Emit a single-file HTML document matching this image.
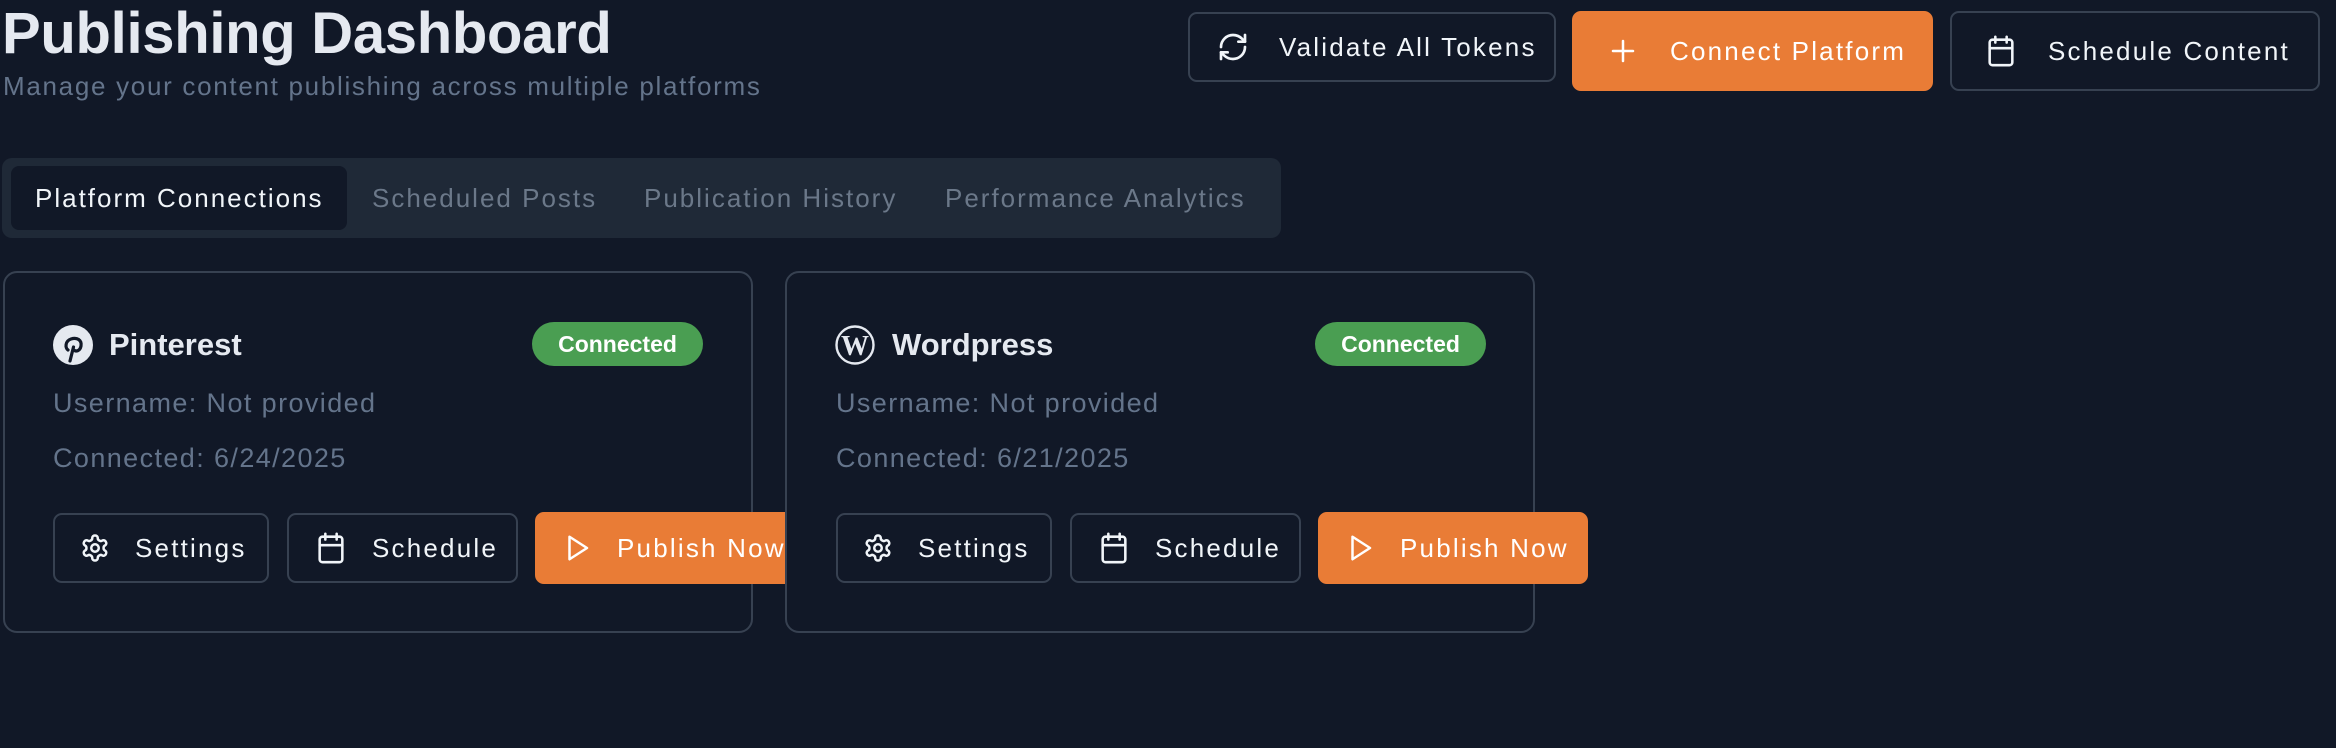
<!DOCTYPE html>
<html><head><meta charset="utf-8"><style>
*{box-sizing:border-box;margin:0;padding:0}
body{width:2336px;height:748px;background:#111827;font-family:"Liberation Sans",sans-serif;position:relative;overflow:hidden;color:#f1f5f9}
.a{position:absolute}
h1{position:absolute;left:2px;top:0px;font-size:58px;font-weight:700;color:#e5e9f0;letter-spacing:-0.3px;white-space:nowrap}
.sub{left:3px;top:71px;font-size:26px;color:#64748b;white-space:nowrap;letter-spacing:1.7px}
.btn{position:absolute;display:flex;align-items:center;border:2px solid #374151;border-radius:9px;font-size:26px;color:#f1f5f9;white-space:nowrap;background:#111827;letter-spacing:2.2px}
.btn svg{flex:none}
.or{background:#e97c36;border-color:#e97c36;color:#fff}
.tabs{left:2px;top:158px;width:1279px;height:80px;background:#1f2937;border-radius:10px}
.tab{position:absolute;top:166px;height:64px;line-height:64px;font-size:26px;color:#6b7889;white-space:nowrap;letter-spacing:2px}
.act{left:11px;width:336px;background:#111827;border-radius:8px;color:#f1f5f9;padding-left:24px}
.card{position:absolute;top:271px;width:750px;height:362px;border:2px solid #374151;border-radius:14px;background:#111827}
.name{position:absolute;top:327px;font-size:31px;font-weight:700;color:#e5e9f0}
.badge{position:absolute;top:322px;width:171px;height:44px;border-radius:22px;background:#4a9e52;color:#fff;font-weight:700;font-size:23px;text-align:center;line-height:44px}
.meta{position:absolute;font-size:27px;color:#64748b;white-space:nowrap;letter-spacing:1.4px}
</style></head><body>
<h1>Publishing Dashboard</h1>
<div class="a sub">Manage your content publishing across multiple platforms</div>

<div class="btn" style="left:1188px;top:12px;width:368px;height:70px;padding-left:27px">
<svg width="32" height="32" viewBox="0 0 24 24" fill="none" stroke="#f1f5f9" stroke-width="2" stroke-linecap="round" stroke-linejoin="round"><path d="M3 12a9 9 0 0 1 9-9 9.75 9.75 0 0 1 6.74 2.74L21 8"/><path d="M21 3v5h-5"/><path d="M21 12a9 9 0 0 1-9 9 9.75 9.75 0 0 1-6.74-2.74L3 16"/><path d="M8 16H3v5"/></svg>
<span style="margin-left:30px">Validate All Tokens</span></div>
<div class="btn or" style="left:1572px;top:11px;width:361px;height:80px;padding-left:34px">
<svg width="30" height="30" viewBox="0 0 24 24" fill="none" stroke="#fff" stroke-width="2" stroke-linecap="round"><path d="M12 4v16M4 12h16"/></svg>
<span style="margin-left:32px">Connect Platform</span></div>
<div class="btn" style="left:1950px;top:11px;width:370px;height:80px;padding-left:32px">
<svg width="34" height="34" viewBox="0 0 24 24" fill="none" stroke="#f1f5f9" stroke-width="1.8" stroke-linecap="round" stroke-linejoin="round"><rect x="4" y="4" width="16" height="18" rx="2"/><path d="M8 2v4M16 2v4M4 10h16"/></svg>
<span style="margin-left:30px">Schedule Content</span></div>

<div class="a tabs"></div>
<div class="tab act">Platform Connections</div>
<div class="tab" style="left:372px">Scheduled Posts</div>
<div class="tab" style="left:644px">Publication History</div>
<div class="tab" style="left:945px">Performance Analytics</div>

<!-- card 1 -->
<div class="card" style="left:3px"></div>
<svg class="a" style="left:53px;top:325px" width="40" height="40" viewBox="0 0 40 40"><circle cx="20" cy="20" r="20" fill="#e5e9f0"/><path d="M17 36l3.5-14M15 25c-3-2-3-9 3-11 6-2 11 1 10 7-1 5-5 6-7 4" fill="none" stroke="#111827" stroke-width="3.2" stroke-linecap="round"/></svg>
<div class="name" style="left:109px">Pinterest</div>
<div class="badge" style="left:532px">Connected</div>
<div class="meta" style="left:53px;top:388px">Username: Not provided</div>
<div class="meta" style="left:53px;top:443px">Connected: 6/24/2025</div>
<div class="btn" style="left:53px;top:513px;width:216px;height:70px;padding-left:25px">
<svg width="30" height="30" viewBox="0 0 24 24" fill="none" stroke="#f1f5f9" stroke-width="2" stroke-linecap="round" stroke-linejoin="round"><path d="M12.22 2h-.44a2 2 0 0 0-2 2v.18a2 2 0 0 1-1 1.73l-.43.25a2 2 0 0 1-2 0l-.15-.08a2 2 0 0 0-2.73.73l-.22.38a2 2 0 0 0 .73 2.73l.15.1a2 2 0 0 1 1 1.72v.51a2 2 0 0 1-1 1.74l-.15.09a2 2 0 0 0-.73 2.73l.22.38a2 2 0 0 0 2.73.73l.15-.08a2 2 0 0 1 2 0l.43.25a2 2 0 0 1 1 1.73V20a2 2 0 0 0 2 2h.44a2 2 0 0 0 2-2v-.18a2 2 0 0 1 1-1.73l.43-.25a2 2 0 0 1 2 0l.15.08a2 2 0 0 0 2.73-.73l.22-.39a2 2 0 0 0-.73-2.73l-.15-.08a2 2 0 0 1-1-1.74v-.5a2 2 0 0 1 1-1.74l.15-.09a2 2 0 0 0 .73-2.73l-.22-.38a2 2 0 0 0-2.73-.73l-.15.08a2 2 0 0 1-2 0l-.43-.25a2 2 0 0 1-1-1.73V4a2 2 0 0 0-2-2z"/><circle cx="12" cy="12" r="3"/></svg>
<span style="margin-left:25px">Settings</span></div>
<div class="btn" style="left:287px;top:513px;width:231px;height:70px;padding-left:25px">
<svg width="34" height="34" viewBox="0 0 24 24" fill="none" stroke="#f1f5f9" stroke-width="1.8" stroke-linecap="round" stroke-linejoin="round"><rect x="4" y="4" width="16" height="18" rx="2"/><path d="M8 2v4M16 2v4M4 10h16"/></svg>
<span style="margin-left:24px">Schedule</span></div>
<div class="btn or" style="left:535px;top:512px;width:270px;height:72px;padding-left:25px">
<svg width="30" height="30" viewBox="0 0 24 24" fill="none" stroke="#fff" stroke-width="2" stroke-linejoin="round"><path d="M6 3l14 9-14 9z"/></svg>
<span style="margin-left:25px">Publish Now</span></div>

<!-- card 2 -->
<div class="card" style="left:785px"></div>
<svg class="a" style="left:835px;top:325px" width="40" height="40" viewBox="0 0 40 40"><circle cx="20" cy="20" r="18.5" fill="none" stroke="#e5e9f0" stroke-width="2.4"/><text x="20" y="30" text-anchor="middle" font-family="Liberation Serif,serif" font-size="28" font-weight="700" fill="#e5e9f0">W</text></svg>
<div class="name" style="left:892px">Wordpress</div>
<div class="badge" style="left:1315px">Connected</div>
<div class="meta" style="left:836px;top:388px">Username: Not provided</div>
<div class="meta" style="left:836px;top:443px">Connected: 6/21/2025</div>
<div class="btn" style="left:836px;top:513px;width:216px;height:70px;padding-left:25px">
<svg width="30" height="30" viewBox="0 0 24 24" fill="none" stroke="#f1f5f9" stroke-width="2" stroke-linecap="round" stroke-linejoin="round"><path d="M12.22 2h-.44a2 2 0 0 0-2 2v.18a2 2 0 0 1-1 1.73l-.43.25a2 2 0 0 1-2 0l-.15-.08a2 2 0 0 0-2.73.73l-.22.38a2 2 0 0 0 .73 2.73l.15.1a2 2 0 0 1 1 1.72v.51a2 2 0 0 1-1 1.74l-.15.09a2 2 0 0 0-.73 2.73l.22.38a2 2 0 0 0 2.73.73l.15-.08a2 2 0 0 1 2 0l.43.25a2 2 0 0 1 1 1.73V20a2 2 0 0 0 2 2h.44a2 2 0 0 0 2-2v-.18a2 2 0 0 1 1-1.73l.43-.25a2 2 0 0 1 2 0l.15.08a2 2 0 0 0 2.73-.73l.22-.39a2 2 0 0 0-.73-2.73l-.15-.08a2 2 0 0 1-1-1.74v-.5a2 2 0 0 1 1-1.74l.15-.09a2 2 0 0 0 .73-2.73l-.22-.38a2 2 0 0 0-2.73-.73l-.15.08a2 2 0 0 1-2 0l-.43-.25a2 2 0 0 1-1-1.73V4a2 2 0 0 0-2-2z"/><circle cx="12" cy="12" r="3"/></svg>
<span style="margin-left:25px">Settings</span></div>
<div class="btn" style="left:1070px;top:513px;width:231px;height:70px;padding-left:25px">
<svg width="34" height="34" viewBox="0 0 24 24" fill="none" stroke="#f1f5f9" stroke-width="1.8" stroke-linecap="round" stroke-linejoin="round"><rect x="4" y="4" width="16" height="18" rx="2"/><path d="M8 2v4M16 2v4M4 10h16"/></svg>
<span style="margin-left:24px">Schedule</span></div>
<div class="btn or" style="left:1318px;top:512px;width:270px;height:72px;padding-left:25px">
<svg width="30" height="30" viewBox="0 0 24 24" fill="none" stroke="#fff" stroke-width="2" stroke-linejoin="round"><path d="M6 3l14 9-14 9z"/></svg>
<span style="margin-left:25px">Publish Now</span></div>
</body></html>
